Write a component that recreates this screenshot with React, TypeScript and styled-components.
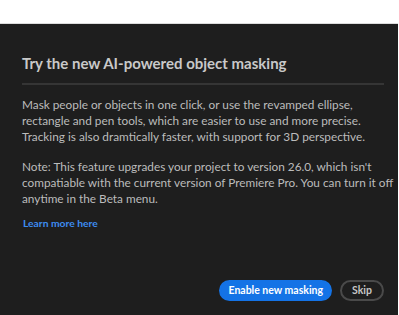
import { FC } from "react";
import styled, { createGlobalStyle } from "styled-components";

const GlobalStyle = createGlobalStyle`
  html, body {
    margin: 0;
    padding: 0;
    background: #ffffff;
  }

  body {
    font-family: Lato, "Noto Sans", "Liberation Sans", sans-serif;
  }
`;

const App: FC = () => {
  return (
    <>
      <GlobalStyle />
      <Page>
        <Dialog>
          <Title>Try the new AI-powered object masking</Title>
          <Divider />
          <Body>
            <p>
              Mask people or objects in one click, or use the revamped ellipse,
              <br />
              rectangle and pen tools, which are easier to use and more precise.
              <br />
              Tracking is also dramtically faster, with support for 3D perspective.
            </p>
            <p>
              Note: This feature upgrades your project to version 26.0, which isn't
              <br />
              compatiable with the current version of Premiere Pro. You can turn it off
              <br />
              anytime in the Beta menu.
            </p>
          </Body>
          <LearnMore href="#">Learn more here</LearnMore>
          <Footer>
            <Button $primary>Enable new masking</Button>
            <Button>Skip</Button>
          </Footer>
        </Dialog>
      </Page>
    </>
  );
};

export default App;

const Page = styled.div`
  width: 399px;
  height: 315px;
  padding-top: 23px;
  box-sizing: border-box;
  overflow: hidden;
`;

const Dialog = styled.div`
  width: 398px;
  height: 292px;
  box-sizing: border-box;
  border-top: 1px solid #dcdcdc;
  background: #1e1e1e;
  padding: 29px 14px 14px 22px;
  display: flex;
  flex-direction: column;
`;

const Title = styled.h1`
  margin: 0;
  font-size: 15px;
  line-height: 20px;
  font-weight: 700;
  color: #c9c9c9;
`;

const Divider = styled.div`
  height: 2px;
  background: #353535;
  margin-top: 10px;
`;

const Body = styled.div`
  margin-top: 12px;
  color: #bcbcbc;
  font-size: 11.8px;
  line-height: 16px;

  p {
    margin: 0;
    white-space: nowrap;
  }

  p + p {
    margin-top: 14px;
  }
`;

const LearnMore = styled.a`
  margin-top: 8px;
  font-size: 10.3px;
  line-height: 16px;
  font-weight: 700;
  color: #3d8cf0;
  text-decoration: none;
  align-self: flex-start;
  margin-left: 1px;
`;

const Footer = styled.div`
  margin-top: auto;
  display: flex;
  justify-content: flex-end;
  column-gap: 8px;
`;

const Button = styled.button<{ $primary?: boolean }>`
  height: 21px;
  box-sizing: border-box;
  padding: 0 ${(p) => (p.$primary ? "7px" : "10px")};
  border-radius: 11px;
  border: 2px solid ${(p) => (p.$primary ? "#1473e6" : "#4a4a4a")};
  background: ${(p) => (p.$primary ? "#1473e6" : "transparent")};
  color: ${(p) => (p.$primary ? "#ffffff" : "#c6c6c6")};
  font-family: Lato, "Noto Sans", "Liberation Sans", sans-serif;
  font-size: 10.5px;
  font-weight: 700;
  line-height: 17px;
  cursor: pointer;
`;
